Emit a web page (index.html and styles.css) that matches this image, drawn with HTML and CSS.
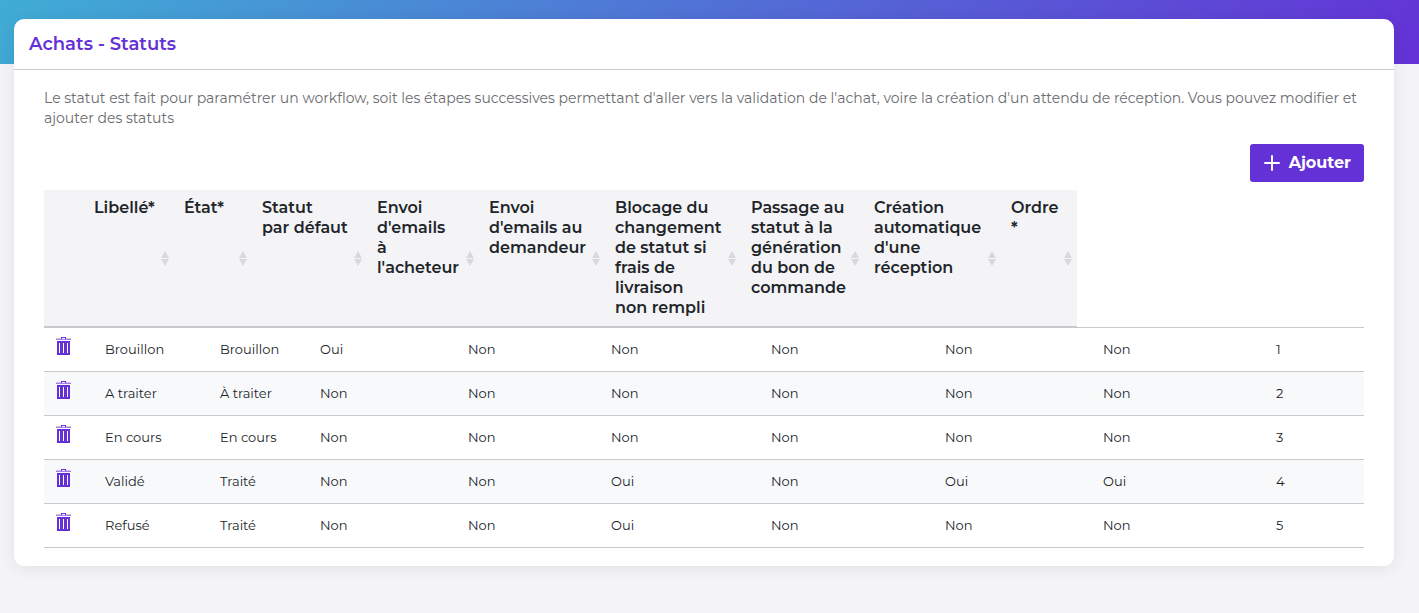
FILE: index.html
```
<!DOCTYPE html>
<html lang="fr">
<head>
<meta charset="utf-8">
<meta name="viewport" content="width=device-width, initial-scale=1">
<title>Achats - Statuts</title>
<link rel="stylesheet" href="styles.css">
</head>
<body>
<svg class="sprite" aria-hidden="true">
  <symbol id="trash" viewBox="0 0 15 18">
    <path d="M5 0h5v2h5v1H0V2h5z M6 1v1h3V1z" fill="currentColor" fill-rule="evenodd"/>
    <path d="M0 1h5v1H0z M10 1h5v1h-5z" fill="#d0c1f3"/>
    <path d="M0 2h15v1H0z" fill="#a07fe6"/>
    <path d="M1 4h13v14H1z M3 6v10h1V6z M7 6v10h1V6z M11 6v10h1V6z" fill="currentColor" fill-rule="evenodd"/>
  </symbol>
</svg>
<main class="page">
  <section class="card">
    <header class="card-header"><h1 class="card-title">Achats - Statuts</h1></header>
    <div class="card-body">
      <p class="intro">Le statut est fait pour paramétrer un workflow, soit les étapes successives permettant d'aller vers la validation de l'achat, voire la création d'un attendu de réception. Vous pouvez modifier et ajouter des statuts</p>
      <div class="toolbar">
        <button type="button" class="add-button"><svg class="plus" viewBox="0 0 16 16" aria-hidden="true"><path d="M8 1v14M1 8h14" stroke="currentColor" stroke-width="2" stroke-linecap="round"/></svg>Ajouter</button>
      </div>
      <table class="head-table">
        <colgroup><col class="h0"><col class="h1"><col class="h2"><col class="h3"><col class="h4"><col class="h5"><col class="h6"><col class="h7"><col class="h8"><col class="h9"></colgroup>
        <thead>
          <tr>
            <th></th>
            <th class="sortable" scope="col">Libellé*</th>
            <th class="sortable" scope="col">État*</th>
            <th class="sortable" scope="col">Statut<br>par défaut</th>
            <th class="sortable" scope="col">Envoi<br>d'emails<br>à<br>l'acheteur</th>
            <th class="sortable" scope="col">Envoi<br>d'emails au<br>demandeur</th>
            <th class="sortable" scope="col">Blocage du<br>changement<br>de statut si<br>frais de<br>livraison<br>non rempli</th>
            <th class="sortable" scope="col">Passage au<br>statut à la<br>génération<br>du bon de<br>commande</th>
            <th class="sortable" scope="col">Création<br>automatique<br>d'une<br>réception</th>
            <th class="sortable" scope="col">Ordre<br>*</th>
          </tr>
        </thead>
      </table>
      <table class="data-table">
        <colgroup><col class="c0"><col class="c1"><col class="c2"><col class="c3"><col class="c4"><col class="c5"><col class="c6"><col class="c7"><col class="c8"><col class="c9"></colgroup>
        <tbody>
          <tr><td><button type="button" class="delete" aria-label="Supprimer Brouillon"><svg class="trash"><use href="#trash"/></svg></button></td><td>Brouillon</td><td>Brouillon</td><td>Oui</td><td>Non</td><td>Non</td><td>Non</td><td>Non</td><td>Non</td><td>1</td></tr>
          <tr><td><button type="button" class="delete" aria-label="Supprimer A traiter"><svg class="trash"><use href="#trash"/></svg></button></td><td>A traiter</td><td>À traiter</td><td>Non</td><td>Non</td><td>Non</td><td>Non</td><td>Non</td><td>Non</td><td>2</td></tr>
          <tr><td><button type="button" class="delete" aria-label="Supprimer En cours"><svg class="trash"><use href="#trash"/></svg></button></td><td>En cours</td><td>En cours</td><td>Non</td><td>Non</td><td>Non</td><td>Non</td><td>Non</td><td>Non</td><td>3</td></tr>
          <tr><td><button type="button" class="delete" aria-label="Supprimer Validé"><svg class="trash"><use href="#trash"/></svg></button></td><td>Validé</td><td>Traité</td><td>Non</td><td>Non</td><td>Oui</td><td>Non</td><td>Oui</td><td>Oui</td><td>4</td></tr>
          <tr><td><button type="button" class="delete" aria-label="Supprimer Refusé"><svg class="trash"><use href="#trash"/></svg></button></td><td>Refusé</td><td>Traité</td><td>Non</td><td>Non</td><td>Oui</td><td>Non</td><td>Non</td><td>Non</td><td>5</td></tr>
        </tbody>
      </table>
    </div>
  </section>
</main>
</body>
</html>
```
FILE: styles.css
```
* { box-sizing: border-box; }

body {
  margin: 0;
  background: #f4f4f6;
  color: #212529;
  font-family: Montserrat, Inter, sans-serif;
  font-size: 14px;
  line-height: 20px;
}

.sprite { display: none; }

.page {
  padding: 19px 25px 47px 14px;
  background: linear-gradient(135deg, #3fadd5, #6431d6) no-repeat top / 100% 64px;
}

.card {
  background: #fff;
  border-radius: 10px;
  box-shadow: 0 2px 16px rgba(0, 0, 0, 0.08);
}

.card-header {
  padding: 15px;
  border-bottom: 1px solid #c8c9cb;
}

.card-title {
  margin: 0;
  color: #6431d6;
  font-size: 18px;
  font-weight: 600;
  line-height: 20px;
}

.card-body { padding: 18px 30px; }

.intro {
  margin: 0 0 16px;
  color: #6a6c6f;
  font-size: 14px;
  font-weight: 400;
}

.toolbar {
  display: flex;
  justify-content: flex-end;
  margin-bottom: 8px;
}

.add-button {
  display: flex;
  align-items: center;
  gap: 9px;
  height: 38px;
  padding: 0 13px 0 14px;
  border: 0;
  border-radius: 3px;
  background: #6431d6;
  color: #fff;
  font: inherit;
  font-size: 16px;
  font-weight: 700;
}

.plus { width: 16px; height: 16px; }

table {
  table-layout: fixed;
  border-collapse: separate;
  border-spacing: 0;
}

.head-table { width: 78.25%; }

.head-table th {
  padding: 8px 0 8px 10px;
  background: #f4f4f7;
  border-bottom: 2px solid #c8c9cb;
  font-size: 16px;
  font-weight: 600;
  text-align: left;
  vertical-align: top;
  white-space: nowrap;
}

.head-table .sortable {
  background: #f4f4f7 url("data:image/svg+xml,%3Csvg xmlns='http://www.w3.org/2000/svg' viewBox='0 0 8 15'%3E%3Cpath d='M4 0l4 7H0zM0 8h8l-4 7z' fill='%23d9d9db'/%3E%3C/svg%3E") no-repeat right 5px center / 8px 15px;
}

.h0 { width: 40px; }
.h1 { width: 90px; }
.h2 { width: 78px; }
.h3 { width: 115px; }
.h4 { width: 112px; }
.h5 { width: 126px; }
.h6 { width: 136px; }
.h7 { width: 123px; }
.h8 { width: 137px; }
.h9 { width: 76px; }

.data-table {
  width: 100%;
  margin-top: -1px;
  border-bottom: 1px solid #c8c9cb;
}

.data-table td {
  height: 44px;
  padding: 0 12px 2px;
  border-top: 1px solid #c8c9cb;
  font-size: 13px;
  font-weight: 400;
}

.data-table tr:nth-child(even) { background: #f8f9fb; }

.c0 { width: 49px; }
.c1 { width: 115px; }
.c2 { width: 100px; }
.c3 { width: 148px; }
.c4 { width: 143px; }
.c5 { width: 160px; }
.c6 { width: 174px; }
.c7 { width: 158px; }
.c8 { width: 173px; }
.c9 { width: 100px; }

.delete {
  display: block;
  padding: 0 0 6px;
  border: 0;
  background: none;
  color: #6431d6;
}

.trash { display: block; width: 15px; height: 18px; }
```
